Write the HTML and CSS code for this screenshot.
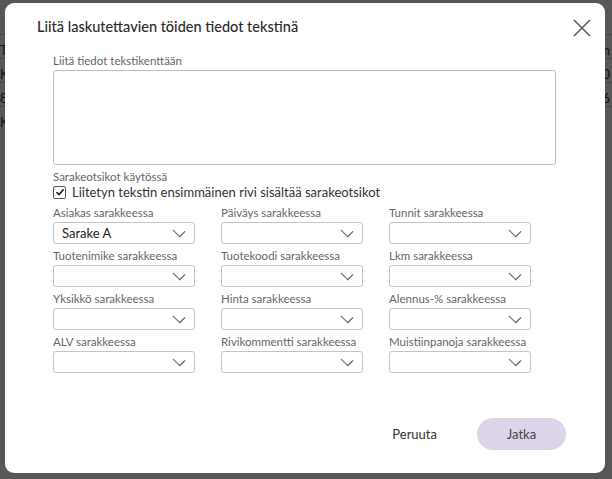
FILE: index.html
```html
<!DOCTYPE html>
<html lang="fi">
<head>
    <meta charset="UTF-8">
    <title>Liitä laskutettavien töiden tiedot tekstinä</title>
    <link rel="stylesheet" href="styles.css">
</head>
<body>
    <div class="backdrop">
        <div class="bg-row"><span>Ti</span><span class="right">m</span></div>
        <div class="bg-row"><span>Kx</span><span class="right">10</span></div>
        <div class="bg-row"><span>8</span><span class="right">6</span></div>
        <div class="bg-row"><span>K</span><span class="right"></span></div>
    </div>
    <div class="overlay"></div>

    <div class="modal">
        <div class="modal-head">
            <h1>Liitä laskutettavien töiden tiedot tekstinä</h1>
            <button class="close" aria-label="Sulje">
                <svg width="18" height="18" viewBox="0 0 18 18">
                    <path d="M1 1 L17 17 M17 1 L1 17" stroke="#555" stroke-width="1.5" fill="none"/>
                </svg>
            </button>
        </div>

        <div class="modal-body">
            <label class="field-label">Liitä tiedot tekstikenttään</label>
            <textarea class="paste"></textarea>

            <div class="field-label headers-label">Sarakeotsikot käytössä</div>
            <label class="check">
                <span class="box">
                    <svg width="10" height="10" viewBox="0 0 10 10">
                        <path d="M1.5 5.2 L4 7.6 L8.6 2.4" stroke="#222" stroke-width="1.6" fill="none"/>
                    </svg>
                </span>
                Liitetyn tekstin ensimmäinen rivi sisältää sarakeotsikot
            </label>

            <div class="columns">
                <div class="col">
                    <div class="field-label">Asiakas sarakkeessa</div>
                    <div class="select"><span>Sarake A</span><i class="chev"></i></div>
                </div>
                <div class="col">
                    <div class="field-label">Päiväys sarakkeessa</div>
                    <div class="select"><span></span><i class="chev"></i></div>
                </div>
                <div class="col">
                    <div class="field-label">Tunnit sarakkeessa</div>
                    <div class="select"><span></span><i class="chev"></i></div>
                </div>
                <div class="col">
                    <div class="field-label">Tuotenimike sarakkeessa</div>
                    <div class="select"><span></span><i class="chev"></i></div>
                </div>
                <div class="col">
                    <div class="field-label">Tuotekoodi sarakkeessa</div>
                    <div class="select"><span></span><i class="chev"></i></div>
                </div>
                <div class="col">
                    <div class="field-label">Lkm sarakkeessa</div>
                    <div class="select"><span></span><i class="chev"></i></div>
                </div>
                <div class="col">
                    <div class="field-label">Yksikkö sarakkeessa</div>
                    <div class="select"><span></span><i class="chev"></i></div>
                </div>
                <div class="col">
                    <div class="field-label">Hinta sarakkeessa</div>
                    <div class="select"><span></span><i class="chev"></i></div>
                </div>
                <div class="col">
                    <div class="field-label">Alennus-% sarakkeessa</div>
                    <div class="select"><span></span><i class="chev"></i></div>
                </div>
                <div class="col">
                    <div class="field-label">ALV sarakkeessa</div>
                    <div class="select"><span></span><i class="chev"></i></div>
                </div>
                <div class="col">
                    <div class="field-label">Rivikommentti sarakkeessa</div>
                    <div class="select"><span></span><i class="chev"></i></div>
                </div>
                <div class="col">
                    <div class="field-label">Muistiinpanoja sarakkeessa</div>
                    <div class="select"><span></span><i class="chev"></i></div>
                </div>
            </div>
        </div>

        <div class="modal-foot">
            <button class="btn-text">Peruuta</button>
            <button class="btn-primary">Jatka</button>
        </div>
    </div>
</body>
</html>
```

FILE: styles.css
```css
html, body {
    margin: 0;
    padding: 0;
}
body {
    width: 612px;
    height: 479px;
    overflow: hidden;
    position: relative;
    background: #fff;
    font-family: Lato, "Noto Sans", sans-serif;
    color: #333;
}

/* page behind the dialog */
.backdrop {
    padding-top: 34px;
}
.bg-row {
    height: 23px;
    border-top: 1px solid #ccc;
    display: flex;
    justify-content: space-between;
    align-items: flex-end;
    font-size: 13px;
    color: #333;
}
.bg-row .right {
    padding-right: 2px;
}
.overlay {
    position: absolute;
    inset: 0;
    background: rgba(0, 0, 0, 0.66);
}

/* dialog */
.modal {
    position: absolute;
    left: 5px;
    top: 3px;
    width: 600px;
    height: 470px;
    background: #fff;
    border-radius: 9px;
    box-sizing: border-box;
    padding: 14px 14px 0 32px;
    display: flex;
    flex-direction: column;
}
.modal-head {
    display: flex;
    justify-content: space-between;
    align-items: flex-start;
}
.modal-head h1 {
    margin: 0;
    font-size: 14.5px;
    font-weight: 500;
    line-height: 19px;
    color: #2b2b2b;
}
.close {
    border: 0;
    background: none;
    padding: 0;
    margin: 2px 0 0;
    width: 18px;
    height: 18px;
    cursor: pointer;
}

.modal-body {
    padding: 17px 35px 0 16px;
}
.field-label {
    display: block;
    font-size: 11.5px;
    color: #666;
    line-height: 14px;
    margin-bottom: 2px;
    white-space: nowrap;
}
.paste {
    display: block;
    width: 100%;
    height: 95px;
    box-sizing: border-box;
    border: 1px solid #bdbdbd;
    border-radius: 3px;
    resize: none;
    margin: 0;
}
.headers-label {
    margin-top: 5px;
    margin-bottom: 0;
}
.check {
    display: flex;
    align-items: center;
    gap: 6px;
    font-size: 13px;
    color: #333;
    line-height: 16px;
}
.box {
    width: 11px;
    height: 11px;
    border: 1px solid #555;
    border-radius: 2px;
    display: flex;
    align-items: center;
    justify-content: center;
}

.columns {
    display: grid;
    grid-template-columns: repeat(3, 142px);
    column-gap: 26px;
    row-gap: 5px;
    margin-top: 6px;
}
.select {
    height: 22px;
    box-sizing: border-box;
    border: 1px solid #c4c4c4;
    border-radius: 3px;
    display: flex;
    align-items: center;
    justify-content: space-between;
    padding: 0 8px 0 8px;
    font-size: 13px;
    color: #222;
}
.chev {
    width: 7px;
    height: 7px;
    border-right: 1px solid #666;
    border-bottom: 1px solid #666;
    transform: rotate(45deg) scaleX(1.3);
    margin: -4px 3px 0 0;
}

.modal-foot {
    margin-top: auto;
    margin-bottom: 23px;
    display: flex;
    justify-content: flex-end;
    align-items: center;
    gap: 20px;
    padding-right: 25px;
}
.btn-text {
    border: 0;
    background: none;
    font-family: inherit;
    font-size: 13px;
    color: #333;
    padding: 0 20px;
}
.btn-primary {
    border: 0;
    width: 89px;
    height: 32px;
    border-radius: 16px;
    background: #ddd4ea;
    font-family: inherit;
    font-size: 13px;
    color: #444;
}
```
